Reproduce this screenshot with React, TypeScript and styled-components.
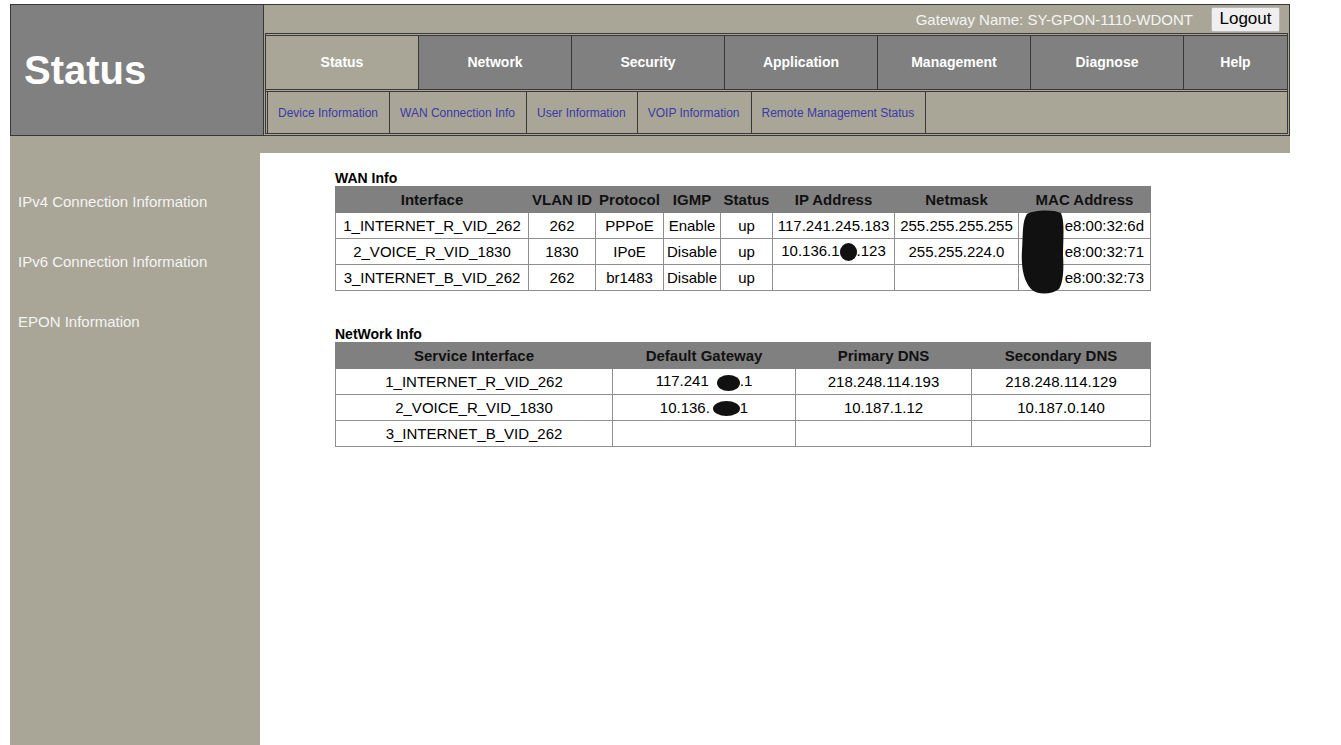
import React from 'react';
import styled, { createGlobalStyle } from 'styled-components';

const TAN = '#a9a697';
const GRAY = '#808080';
const LINE = '#383838';
const GRID = '#8f8f8f';

const GlobalStyle = createGlobalStyle`
  html, body {
    margin: 0;
    padding: 0;
    background: #ffffff;
  }
  body {
    font-family: "Liberation Sans", Arial, sans-serif;
    overflow: hidden;
  }
  * { box-sizing: border-box; }
`;

const Page = styled.div`
  width: 1290px;
  padding: 4px 0 0 10px;
`;

const Header = styled.header`
  display: flex;
  height: 132px;
  border: 1px solid ${LINE};
`;

const Brand = styled.div`
  width: 253px;
  flex: none;
  display: flex;
  align-items: center;
  padding-left: 13px;
  background: ${GRAY};
  border-right: 1px solid ${LINE};
  color: #ffffff;
  font-size: 40px;
  font-weight: bold;
`;

const Panel = styled.div`
  flex: 1;
  display: flex;
  flex-direction: column;
  background: ${TAN};
`;

const TopBar = styled.div`
  height: 28px;
  display: flex;
  align-items: center;
  justify-content: flex-end;
  gap: 18px;
  padding-right: 9px;
`;

const GatewayName = styled.span`
  color: #f4f4f4;
  font-size: 15px;
`;

const LogoutButton = styled.button`
  height: 25px;
  width: 69px;
  padding: 0;
  background: #efefef;
  border: 1px solid #b8b8b8;
  border-radius: 2px;
  color: #000000;
  font-family: "Liberation Sans", Arial, sans-serif;
  font-size: 17px;
`;

const NavRow = styled.nav`
  display: grid;
  grid-template-columns: repeat(6, 153px) 1fr;
  height: 56px;
  margin: 0 1px;
  border-top: 3px double ${LINE};
  border-left: 1px solid ${LINE};
  border-right: 1px solid ${LINE};
`;

const NavTab = styled.div<{ $active?: boolean }>`
  display: flex;
  align-items: center;
  justify-content: center;
  padding-bottom: 1px;
  background: ${(p) => (p.$active ? TAN : GRAY)};
  border-right: 1px solid ${LINE};
  color: #ffffff;
  font-size: 14px;
  font-weight: bold;
  &:last-child {
    border-right: none;
  }
`;

const SubRow = styled.div`
  display: flex;
  height: 45px;
  margin: 0 1px 1px 1px;
  padding-left: 1px;
  border-top: 3px double ${LINE};
  border-bottom: 1px solid ${LINE};
  border-left: 1px solid ${LINE};
  border-right: 1px solid ${LINE};
`;

const SubTab = styled.div`
  display: flex;
  align-items: center;
  padding: 0 11px 0 10px;
  border-right: 1px solid ${LINE};
  color: #3a3aa8;
  font-size: 12px;
  white-space: nowrap;
  &:first-child {
    border-left: 1px solid ${LINE};
  }
`;

const Band = styled.div`
  height: 17px;
  width: 1280px;
  background: ${TAN};
`;

const Body = styled.div`
  display: flex;
  height: calc(100vh - 153px);
`;

const Sidebar = styled.aside`
  width: 250px;
  flex: none;
  display: flex;
  flex-direction: column;
  gap: 40px;
  padding: 39px 0 0 8px;
  background: ${TAN};
`;

const SideLink = styled.div`
  color: #f4f4f4;
  font-size: 15px;
  line-height: 20px;
`;

const Content = styled.main`
  flex: 1;
  padding: 17px 0 0 75px;
  background: #ffffff;
`;

const Section = styled.section<{ $gap?: number }>`
  margin-top: ${(p) => p.$gap ?? 0}px;
`;

const SectionTitle = styled.div`
  color: #000000;
  font-size: 14px;
  font-weight: bold;
  line-height: 16px;
`;

const TableWrap = styled.div`
  position: relative;
  width: 815px;
`;

const Table = styled.table`
  width: 815px;
  border-collapse: collapse;
  table-layout: fixed;
  border: 1px solid ${GRID};
  font-size: 15px;
  color: #000000;
`;

const Th = styled.th`
  height: 26px;
  padding: 0;
  background: ${GRAY};
  border: 1px solid ${GRAY};
  color: #111111;
  font-weight: bold;
  text-align: center;
  white-space: nowrap;
`;

const Td = styled.td<{ $right?: boolean }>`
  height: 26px;
  padding: ${(p) => (p.$right ? '0 6px 0 0' : '0')};
  border: 1px solid ${GRID};
  text-align: ${(p) => (p.$right ? 'right' : 'center')};
  white-space: nowrap;
`;

/* Inline ink blot that hides part of an address */
const Blot = styled.span<{ $w: number; $h: number; $ml?: number }>`
  display: inline-block;
  width: ${(p) => p.$w}px;
  height: ${(p) => p.$h}px;
  margin-left: ${(p) => p.$ml ?? 0}px;
  vertical-align: middle;
  background: #111111;
  border-radius: 50%;
`;

/* Large hand-drawn blot lying over the MAC column */
const MacBlot = styled.svg`
  position: absolute;
  left: 686px;
  top: 24px;
  width: 44px;
  height: 84px;
`;

const navTabs = ['Status', 'Network', 'Security', 'Application', 'Management', 'Diagnose', 'Help'];
const subTabs = [
  'Device Information',
  'WAN Connection Info',
  'User Information',
  'VOIP Information',
  'Remote Management Status',
];
const sideLinks = ['IPv4 Connection Information', 'IPv6 Connection Information', 'EPON Information'];

const wanCols = [193, 67, 68, 57, 52, 122, 124, 132];
const wanHead = ['Interface', 'VLAN ID', 'Protocol', 'IGMP', 'Status', 'IP Address', 'Netmask', 'MAC Address'];

const netCols = [277, 183, 176, 179];
const netHead = ['Service Interface', 'Default Gateway', 'Primary DNS', 'Secondary DNS'];

export default function App() {
  return (
    <>
      <GlobalStyle />
      <Page>
        <Header>
          <Brand>Status</Brand>
          <Panel>
            <TopBar>
              <GatewayName>Gateway Name: SY-GPON-1110-WDONT</GatewayName>
              <LogoutButton>Logout</LogoutButton>
            </TopBar>
            <NavRow>
              {navTabs.map((t, i) => (
                <NavTab key={t} $active={i === 0}>
                  {t}
                </NavTab>
              ))}
            </NavRow>
            <SubRow>
              {subTabs.map((t) => (
                <SubTab key={t}>{t}</SubTab>
              ))}
            </SubRow>
          </Panel>
        </Header>
        <Band />
        <Body>
          <Sidebar>
            {sideLinks.map((l) => (
              <SideLink key={l}>{l}</SideLink>
            ))}
          </Sidebar>
          <Content>
            <Section>
              <SectionTitle>WAN Info</SectionTitle>
              <TableWrap>
                <Table>
                  <colgroup>
                    {wanCols.map((w, i) => (
                      <col key={i} style={{ width: w }} />
                    ))}
                  </colgroup>
                  <thead>
                    <tr>
                      {wanHead.map((h) => (
                        <Th key={h}>{h}</Th>
                      ))}
                    </tr>
                  </thead>
                  <tbody>
                    <tr>
                      <Td>1_INTERNET_R_VID_262</Td>
                      <Td>262</Td>
                      <Td>PPPoE</Td>
                      <Td>Enable</Td>
                      <Td>up</Td>
                      <Td>117.241.245.183</Td>
                      <Td>255.255.255.255</Td>
                      <Td $right>e8:00:32:6d</Td>
                    </tr>
                    <tr>
                      <Td>2_VOICE_R_VID_1830</Td>
                      <Td>1830</Td>
                      <Td>IPoE</Td>
                      <Td>Disable</Td>
                      <Td>up</Td>
                      <Td>
                        10.136.1
                        <Blot $w={17} $h={18} />
                        .123
                      </Td>
                      <Td>255.255.224.0</Td>
                      <Td $right>e8:00:32:71</Td>
                    </tr>
                    <tr>
                      <Td>3_INTERNET_B_VID_262</Td>
                      <Td>262</Td>
                      <Td>br1483</Td>
                      <Td>Disable</Td>
                      <Td>up</Td>
                      <Td />
                      <Td />
                      <Td $right>e8:00:32:73</Td>
                    </tr>
                  </tbody>
                </Table>
                <MacBlot viewBox="0 0 44 84">
                  <path
                    d="M6,4 C12,0 32,-1 40,3 C44,12 42,30 42,45 C43,60 42,73 38,79 C30,85 16,85 10,79 C2,70 0,55 1,40 C2,25 1,11 6,4 Z"
                    fill="#111111"
                  />
                </MacBlot>
              </TableWrap>
            </Section>

            <Section $gap={35}>
              <SectionTitle>NetWork Info</SectionTitle>
              <TableWrap>
                <Table>
                  <colgroup>
                    {netCols.map((w, i) => (
                      <col key={i} style={{ width: w }} />
                    ))}
                  </colgroup>
                  <thead>
                    <tr>
                      {netHead.map((h) => (
                        <Th key={h}>{h}</Th>
                      ))}
                    </tr>
                  </thead>
                  <tbody>
                    <tr>
                      <Td>1_INTERNET_R_VID_262</Td>
                      <Td>
                        117.241
                        <Blot $w={23} $h={16} $ml={8} />
                        .1
                      </Td>
                      <Td>218.248.114.193</Td>
                      <Td>218.248.114.129</Td>
                    </tr>
                    <tr>
                      <Td>2_VOICE_R_VID_1830</Td>
                      <Td>
                        10.136.
                        <Blot $w={27} $h={15} $ml={3} />
                        1
                      </Td>
                      <Td>10.187.1.12</Td>
                      <Td>10.187.0.140</Td>
                    </tr>
                    <tr>
                      <Td>3_INTERNET_B_VID_262</Td>
                      <Td />
                      <Td />
                      <Td />
                    </tr>
                  </tbody>
                </Table>
              </TableWrap>
            </Section>
          </Content>
        </Body>
      </Page>
    </>
  );
}
